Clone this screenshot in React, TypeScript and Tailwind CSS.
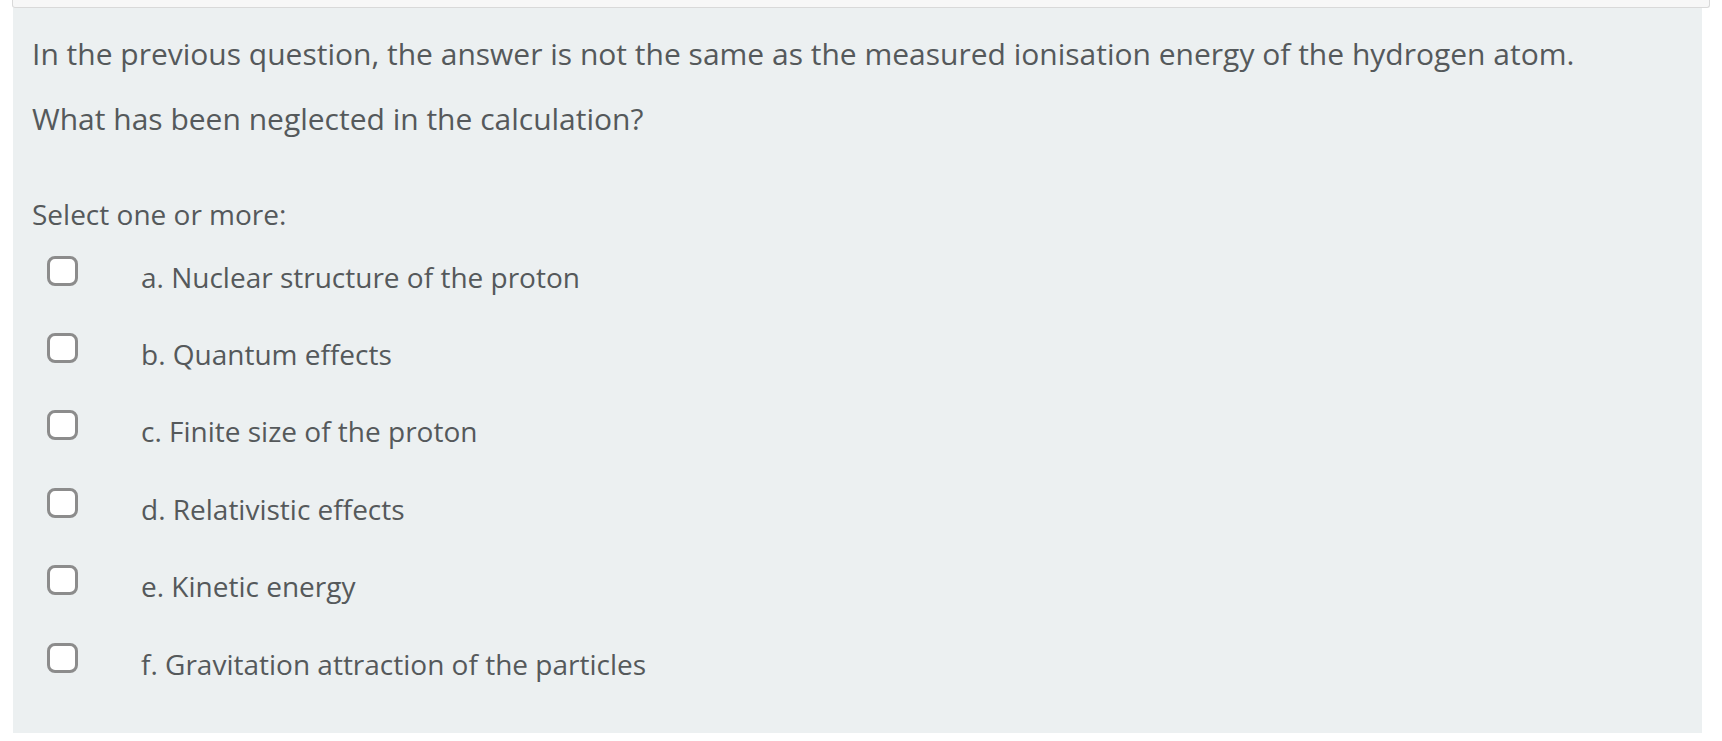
export default function App() {
  const options = [
    'a. Nuclear structure of the proton',
    'b. Quantum effects',
    'c. Finite size of the proton',
    'd. Relativistic effects',
    'e. Kinetic energy',
    'f. Gravitation attraction of the particles',
  ]

  return (
    <div className="w-[1722px] h-[741px] bg-white px-[13px] text-[#55595b]" style={{ fontFamily: '"Open Sans", "Noto Sans", sans-serif' }}>
      {/* previous block, cut off at the top */}
      <div className="h-[8px] bg-[#f7f7f7] border-x border-b border-[#d9d9d9] rounded-b-[3px] -mx-px" />

      <div className="w-[1689px] h-[725px] bg-[#ecf0f1] pl-[19px] pt-[25px]">
        <p className="text-[30px] leading-[42px]">
          In the previous question, the answer is not the same as the measured ionisation energy of the hydrogen atom.
        </p>
        <p className="text-[30px] leading-[42px] mt-[23px]">What has been neglected in the calculation?</p>

        <div className="text-[28px] leading-[42px] mt-[53px]">Select one or more:</div>

        <div className="mt-[3px]">
          {options.map(o => (
            <label key={o} className="flex items-center h-[77.4px] text-[28px]">
              <span className="w-[31px] h-[30px] ml-[15px] mb-[12px] border-[3px] border-[#8c8c8c] rounded-[8px] bg-white shrink-0" />
              <span className="ml-[63px]">{o}</span>
            </label>
          ))}
        </div>
      </div>
    </div>
  )
}
